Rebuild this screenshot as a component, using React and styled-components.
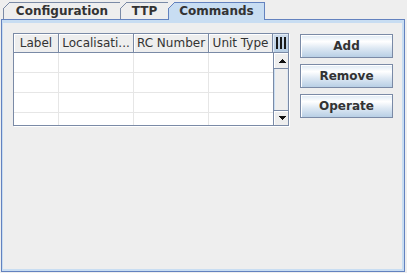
import React from "react";
import styled, { createGlobalStyle } from "styled-components";

const Global = createGlobalStyle`
  html, body { margin: 0; padding: 0; background: #eeeeee; }
  body {
    width: 407px; height: 273px; overflow: hidden;
    font-family: "DejaVu Sans", "Liberation Sans", sans-serif;
    font-size: 12px; color: #333333;
  }
  * { box-sizing: border-box; }
`;

const Frame = styled.div`
  display: flex;
  flex-direction: column;
  width: 404px;
  height: 272px;
  margin-left: 1px;
`;

const TabRow = styled.div`
  display: flex;
  align-items: flex-end;
  height: 19px;
  flex-shrink: 0;
  padding-left: 2px;
`;

const Tab = styled.div`
  position: relative;
  width: ${(p) => p.$w}px;
  height: ${(p) => (p.$selected ? 18 : 17)}px;
  margin-bottom: ${(p) => (p.$selected ? -1 : 0)}px;
  margin-left: ${(p) => (p.$first ? 0 : -1)}px;
  z-index: ${(p) => (p.$selected ? 2 : 1)};
  background: ${(p) => (p.$selected ? "#c8ddf2" : "#eeeeee")};
  border: 1px solid ${(p) => (p.$selected ? "#6382bf" : "#7a8aa6")};
  border-bottom: none;
  font-weight: bold;
  line-height: 16px;
  text-align: center;
  white-space: nowrap;
  &::before {
    content: "";
    position: absolute;
    left: -1px;
    top: -1px;
    width: 7px;
    height: 7px;
    background: linear-gradient(
      to bottom right,
      #eeeeee 0,
      #eeeeee calc(50% - 0.6px),
      ${(p) => (p.$selected ? "#6382bf" : "#7a8aa6")} calc(50% - 0.6px),
      ${(p) => (p.$selected ? "#6382bf" : "#7a8aa6")} calc(50% + 0.6px),
      transparent calc(50% + 0.6px)
    );
  }
`;

const Content = styled.div`
  flex: 1;
  display: flex;
  border: 1px solid #6382bf;
  padding: 3px 2px 2px 1px;
  background: #c8ddf2;
`;

const Panel = styled.div`
  flex: 1;
  display: flex;
  align-items: flex-start;
  gap: 11px;
  padding: 10px 0 0 10px;
  background: #eeeeee;
`;

const ScrollFrame = styled.div`
  width: 276px;
  height: 93px;
  border: 1px solid #7a8aa6;
  box-shadow: 1px 1px 0 #ffffff;
  background: #ffffff;
  display: grid;
  grid-template-columns: 259px 15px;
  grid-template-rows: 19px 72px;
`;

const HeaderRow = styled.div`
  display: flex;
`;

const HeadCell = styled.div`
  width: ${(p) => p.$w}px;
  height: 19px;
  flex-shrink: 0;
  background: #eeeeee;
  border-right: 1px solid #7a8aa6;
  border-bottom: 1px solid #7a8aa6;
  box-shadow: inset 1px 1px 0 #ffffff;
  text-align: center;
  line-height: 18px;
  white-space: nowrap;
  overflow: hidden;
`;

const Corner = styled.div`
  display: flex;
  align-items: center;
  gap: 2px;
  padding-left: 3px;
  height: 19px;
  border-bottom: 1px solid #7a8aa6;
  background: linear-gradient(to bottom, #cddbeb, #b8cfe5);
  box-shadow: inset 1px 1px 0 #e4edf7;
`;

const Bar = styled.span`
  width: 2px;
  height: 12px;
  background: #1a1a1a;
`;

const Body = styled.div`
  overflow: hidden;
  background: #ffffff;
`;

const Row = styled.div`
  display: flex;
  height: 20px;
  border-bottom: 1px solid #e6e6e6;
`;

const Cell = styled.div`
  width: ${(p) => p.$w}px;
  flex-shrink: 0;
  border-right: ${(p) => (p.$last ? "none" : "1px solid #e6e6e6")};
`;

const ScrollBar = styled.div`
  display: flex;
  flex-direction: column;
  background: #eeeeee;
`;

const ScrollButton = styled.div`
  height: ${(p) => p.$h}px;
  flex-shrink: 0;
  display: flex;
  justify-content: flex-start;
  align-items: flex-start;
  padding-left: 5px;
  padding-top: ${(p) => p.$pt}px;
  background: #eeeeee;
  border-left: 1px solid #7a8aa6;
  border-top: ${(p) => (p.$down ? "1px solid #7a8aa6" : "none")};
  border-bottom: ${(p) => (p.$down ? "none" : "1px solid #7a8aa6")};
  box-shadow: inset 1px 1px 0 #ffffff;
`;

const Track = styled.div`
  flex: 1;
  border-left: 1px solid #7a8aa6;
  box-shadow: inset 1px 0 0 #c8ddf2, inset -1px 0 0 #e0e8f2;
  background: #eeeeee;
`;

const ButtonColumn = styled.div`
  display: flex;
  flex-direction: column;
  gap: 6px;
  margin-top: 1px;
`;

const Button = styled.button`
  width: 93px;
  height: 24px;
  padding: 0;
  margin: 0;
  border: 1px solid #7a8aa6;
  box-shadow: inset 1px 1px 0 #ffffff;
  background: linear-gradient(
    to bottom,
    #dde8f3 0%,
    #ffffff 30%,
    #dde8f3 60%,
    #b8cfe5 100%
  );
  font-family: "DejaVu Sans", "Liberation Sans", sans-serif;
  font-size: 12px;
  font-weight: bold;
  color: #333333;
  line-height: 22px;
  text-align: center;
  cursor: default;
`;

const Arrow = ({ down }) => (
  <svg width="7" height="4" viewBox="0 0 7 4" shapeRendering="crispEdges">
    <path
      fill="#111"
      d={
        down
          ? "M0 0H7V1H6V2H5V3H4V4H3V3H2V2H1V1H0Z"
          : "M3 0H4V1H5V2H6V3H7V4H0V3H1V2H2V1H3Z"
      }
    />
  </svg>
);

const columns = [
  { name: "Label", w: 45 },
  { name: "Localisati...", w: 75 },
  { name: "RC Number", w: 75 },
  { name: "Unit Type", w: 64 },
];

export default function App() {
  return (
    <>
      <Global />
      <Frame>
        <TabRow>
          <Tab $w={118} $first>Configuration</Tab>
          <Tab $w={49}>TTP</Tab>
          <Tab $w={97} $selected>Commands</Tab>
        </TabRow>
        <Content>
          <Panel>
            <ScrollFrame>
              <HeaderRow>
                {columns.map((c) => (
                  <HeadCell key={c.name} $w={c.w}>{c.name}</HeadCell>
                ))}
              </HeaderRow>
              <Corner>
                <Bar />
                <Bar />
                <Bar />
              </Corner>
              <Body>
                {[0, 1, 2, 3].map((r) => (
                  <Row key={r}>
                    {columns.map((c, i) => (
                      <Cell key={c.name} $w={c.w} $last={i === columns.length - 1} />
                    ))}
                  </Row>
                ))}
              </Body>
              <ScrollBar>
                <ScrollButton $h={16} $pt={6}>
                  <Arrow />
                </ScrollButton>
                <Track />
                <ScrollButton $h={15} $pt={5} $down>
                  <Arrow down />
                </ScrollButton>
              </ScrollBar>
            </ScrollFrame>
            <ButtonColumn>
              <Button>Add</Button>
              <Button>Remove</Button>
              <Button>Operate</Button>
            </ButtonColumn>
          </Panel>
        </Content>
      </Frame>
    </>
  );
}
